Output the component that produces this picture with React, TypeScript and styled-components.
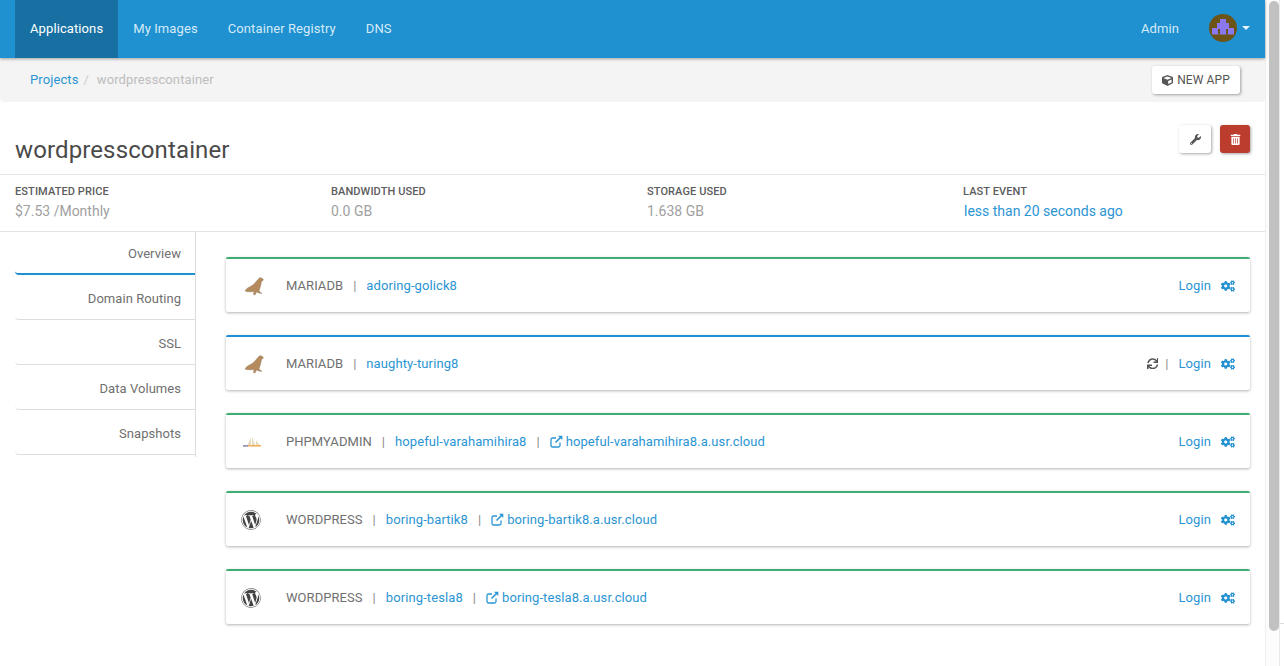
import React from "react";
import styled, { createGlobalStyle } from "styled-components";
import { FaCube, FaWrench, FaTrashAlt, FaCogs, FaSync, FaWordpress } from "react-icons/fa";

const Global = createGlobalStyle`
  html, body { margin: 0; padding: 0; width: 1284px; height: 666px; overflow: hidden; background: #fff; }
  body { font-family: Roboto, "Liberation Sans", sans-serif; font-size: 13px; color: #666; }
  * { box-sizing: border-box; }
  a { color: #2b95d3; text-decoration: none; }
`;

const Page = styled.div`display: flex; width: 1284px; height: 666px;`;
const Main = styled.main`flex: 0 0 1265px; width: 1265px; min-width: 0;`;

const Scrollbar = styled.aside`
  flex: 0 0 15px; border-left: 1px solid #efefef; border-right: 1px solid #eaeaea;
  padding: 1px 0 0 3px; background: #fcfcfc;
`;
const Thumb = styled.div`width: 10px; height: 630px; border-radius: 5px; background: #c1c1c1;`;
const Gutter = styled.div`flex: 1; padding-top: 623px;`;
const GutterTick = styled.div`height: 1px; background: #dcdcdc;`;

const Navbar = styled.nav`
  height: 58px; background: #1f90d0; display: flex; align-items: stretch; padding: 0 15px;
  box-shadow: 0 1px 3px rgba(0,0,0,.35); position: relative; z-index: 2;
`;
const NavItem = styled.a<{ $active?: boolean }>`
  display: flex; align-items: center; padding: 0 15px 2px; font-size: 13px; letter-spacing: .1px;
  color: ${p => (p.$active ? "#fff" : "#d5ebf7")};
  background: ${p => (p.$active ? "#186fa2" : "transparent")};
`;
const NavRight = styled.div`margin-left: auto; display: flex; align-items: center; padding-bottom: 2px;`;
const Admin = styled.span`font-size: 13px; color: #d5ebf7; margin-right: 30px; letter-spacing: .1px;`;
const Caret = styled.span`
  width: 0; height: 0; margin-left: 5px; border-left: 4px solid transparent; border-right: 4px solid transparent;
  border-top: 4px solid #e6f3fb;
`;

const Crumbs = styled.div`
  height: 44px; background: #f4f4f4; display: flex; align-items: center; padding: 0 25px 0 30px;
  border-radius: 0 0 4px 4px; font-size: 13px;
`;
const CrumbTrail = styled.div`display: flex; align-items: center; margin-bottom: 2px;`;
const CrumbRoot = styled.a`letter-spacing: .1px;`;
const CrumbSep = styled.span`color: #ccc; margin: 0 8px 0 5px;`;
const CrumbCurrent = styled.span`color: #bdbdbd; letter-spacing: .1px;`;
const RaisedButton = styled.button`
  border: 0; background: #fff; border-radius: 3px; box-shadow: 1px 1px 3px rgba(0,0,0,.35);
  font: inherit; color: #555; display: inline-flex; align-items: center; justify-content: center;
  cursor: pointer; padding: 0;
`;
const NewApp = styled(RaisedButton)`
  margin-left: auto; width: 88px; height: 28px; font-size: 12px; gap: 4px; letter-spacing: .1px;
`;

const TitleRow = styled.header`
  height: 73px; display: flex; align-items: flex-start; justify-content: space-between;
  padding: 23px 15px 0; border-bottom: 1px solid #e4e4e4;
`;
const Title = styled.h1`margin: 11px 0 0; font-size: 24px; font-weight: 400; color: #4a4a4a; line-height: 28px; letter-spacing: .12px;`;
const TitleActions = styled.div`display: flex; gap: 9px;`;
const IconButton = styled(RaisedButton)`width: 32px; height: 28px; font-size: 11px;`;
const DangerButton = styled(RaisedButton)`width: 30px; height: 28px; font-size: 11px; background: #bc3d2e; color: #fff;`;

const Stats = styled.section`
  height: 57px; display: grid; grid-template-columns: repeat(4, 316px); padding: 10px 15px 0;
  border-bottom: 1px solid #e4e4e4;
`;
const Stat = styled.div`display: flex; flex-direction: column; gap: 4px;`;
const StatLabel = styled.div`font-size: 11px; font-weight: 500; color: #5c5c5c; line-height: 13px; letter-spacing: .1px; text-transform: uppercase;`;
const StatValue = styled.div`font-size: 14px; color: #a0a0a0; line-height: 18px;`;
const EventLink = styled.a`margin-left: 1px;`;

const Body = styled.div`display: flex; padding-left: 15px;`;
const Side = styled.div`width: 181px; flex: none; height: 225px; border-right: 1px solid #ddd;`;
const Tab = styled.a<{ $active?: boolean }>`
  display: flex; align-items: center; justify-content: flex-end; height: ${p => (p.$active ? "43px" : "45px")};
  padding: 2px 14px 0 0;
  font-size: 13px; color: #707070; letter-spacing: .05px;
  border-bottom: ${p => (p.$active ? "2px solid #1f90d0" : "1px solid #ddd")};
  border-radius: 0 0 0 4px;
`;
const Cards = styled.div`flex: 1; padding: 25px 15px 0 30px; display: flex; flex-direction: column; gap: 23px;`;
const Card = styled.article<{ $color: string }>`
  height: 55px; display: flex; align-items: center; padding: 0 15px; background: #fff;
  border-top: 2px solid ${p => p.$color}; border-radius: 2px;
  box-shadow: 0 1px 3px rgba(0,0,0,.3); font-size: 13px;
`;
const Logo = styled.span`width: 45px; flex: none; display: flex; align-items: center; color: #444;`;
const Kind = styled.span`color: #707070; letter-spacing: .06px;`;
const Sep = styled.span`color: #888; margin: 0 10px;`;
const CardLink = styled.a`color: #2b95d3; letter-spacing: .1px; display: inline-flex; align-items: center; gap: 3px;`;
const CardEnd = styled.div`margin-left: auto; display: flex; align-items: center;`;
const Cogs = styled.span`color: #2390d0; display: inline-flex; margin-left: 10px; font-size: 14px;`;
const Spin = styled.span`color: #555; display: inline-flex; font-size: 11.5px;`;
const ThinSep = styled.span`color: #888; margin: 0 10px 0 7px;`;
const SeaLionSvg = styled.svg`margin-left: 3px;`;
const PmaSvg = styled.svg`margin-left: 1px;`;

const SeaLion = () => (
  <SeaLionSvg width="20" height="20" viewBox="0 0 20 20">
    <path d="M1 15 C3 11 7 11 10 8 C12 6 14 3 16 1.5 L18.5 2.5 L19.5 4 L17.5 5.5 C17 9 16 12 15 15 L18 17.5 L15 17 L12.5 16 L11 19 L9.5 18.5 L10 15.5 C7 16 3 16 1 15 Z" fill="#b58a5c" stroke="#8a7460" strokeWidth=".4" />
  </SeaLionSvg>
);
const PmaLogo = () => (
  <PmaSvg width="20" height="12" viewBox="0 0 20 12">
    <path d="M9 1 L9 9 L5.5 9 Z M10 .5 L13 9 L10 9 Z M14 4 L17.5 9 L14 9 Z" fill="#e8dcc0" />
    <rect x="1" y="9" width="18" height="1.6" fill="#f0b060" />
    <rect x="1" y="9" width="5" height="1.6" fill="#8a98c8" />
  </PmaSvg>
);
const OpenLink = () => (
  <svg width="13" height="13" viewBox="0 0 13 13" fill="none" stroke="currentColor" strokeWidth="1.3">
    <path d="M10 7.5 V10.5 A1.5 1.5 0 0 1 8.5 12 H2.5 A1.5 1.5 0 0 1 1 10.5 V4.5 A1.5 1.5 0 0 1 2.5 3 H6" />
    <path d="M8 .7 H12.3 V5 Z" fill="currentColor" stroke="none" />
    <path d="M11 2 L5.5 7.5" strokeWidth="1.6" />
  </svg>
);
const Avatar = () => (
  <svg width="28" height="28" viewBox="0 0 28 28">
    <circle cx="14" cy="14" r="14" fill="#6c5417" />
    <path d="M11 5 H17 V9 H20 V14 H25 V20.5 H3 V14 H8 V9 H11 Z" fill="#8a78f0" />
    <rect x="9" y="15" width="2" height="5.5" fill="#6c5417" />
    <rect x="17" y="15" width="2" height="5.5" fill="#6c5417" />
  </svg>
);

const services = [
  { color: "#3fae72", logo: <SeaLion />, kind: "MARIADB", name: "adoring-golick8" },
  { color: "#1f90d0", logo: <SeaLion />, kind: "MARIADB", name: "naughty-turing8", busy: true },
  { color: "#3fae72", logo: <PmaLogo />, kind: "PHPMYADMIN", name: "hopeful-varahamihira8", url: "hopeful-varahamihira8.a.usr.cloud" },
  { color: "#3fae72", logo: <FaWordpress size={20} />, kind: "WORDPRESS", name: "boring-bartik8", url: "boring-bartik8.a.usr.cloud" },
  { color: "#3fae72", logo: <FaWordpress size={20} />, kind: "WORDPRESS", name: "boring-tesla8", url: "boring-tesla8.a.usr.cloud" },
];
const tabs = ["Overview", "Domain Routing", "SSL", "Data Volumes", "Snapshots"];

export default function App() {
  return (
    <Page>
      <Global />
      <Main>
        <Navbar>
          <NavItem $active>Applications</NavItem>
          <NavItem>My Images</NavItem>
          <NavItem>Container Registry</NavItem>
          <NavItem>DNS</NavItem>
          <NavRight>
            <Admin>Admin</Admin>
            <Avatar />
            <Caret />
          </NavRight>
        </Navbar>
        <Crumbs>
          <CrumbTrail>
            <CrumbRoot>Projects</CrumbRoot>
            <CrumbSep>/</CrumbSep>
            <CrumbCurrent>wordpresscontainer</CrumbCurrent>
          </CrumbTrail>
          <NewApp><FaCube size={11} />NEW APP</NewApp>
        </Crumbs>
        <TitleRow>
          <Title>wordpresscontainer</Title>
          <TitleActions>
            <IconButton><FaWrench /></IconButton>
            <DangerButton><FaTrashAlt /></DangerButton>
          </TitleActions>
        </TitleRow>
        <Stats>
          <Stat><StatLabel>Estimated Price</StatLabel><StatValue>$7.53 /Monthly</StatValue></Stat>
          <Stat><StatLabel>Bandwidth Used</StatLabel><StatValue>0.0 GB</StatValue></Stat>
          <Stat><StatLabel>Storage Used</StatLabel><StatValue>1.638 GB</StatValue></Stat>
          <Stat><StatLabel>Last Event</StatLabel><StatValue><EventLink>less than 20 seconds ago</EventLink></StatValue></Stat>
        </Stats>
        <Body>
          <Side>
            {tabs.map((t, i) => <Tab key={t} $active={i === 0}>{t}</Tab>)}
          </Side>
          <Cards>
            {services.map(s => (
              <Card key={s.name} $color={s.color}>
                <Logo>{s.logo}</Logo>
                <Kind>{s.kind}</Kind>
                <Sep>|</Sep>
                <CardLink>{s.name}</CardLink>
                {s.url && <Sep>|</Sep>}
                {s.url && <CardLink><OpenLink />{s.url}</CardLink>}
                <CardEnd>
                  {s.busy && <Spin><FaSync /></Spin>}
                  {s.busy && <ThinSep>|</ThinSep>}
                  <CardLink>Login</CardLink>
                  <Cogs><FaCogs /></Cogs>
                </CardEnd>
              </Card>
            ))}
          </Cards>
        </Body>
      </Main>
      <Scrollbar><Thumb /></Scrollbar>
      <Gutter><GutterTick /></Gutter>
    </Page>
  );
}
